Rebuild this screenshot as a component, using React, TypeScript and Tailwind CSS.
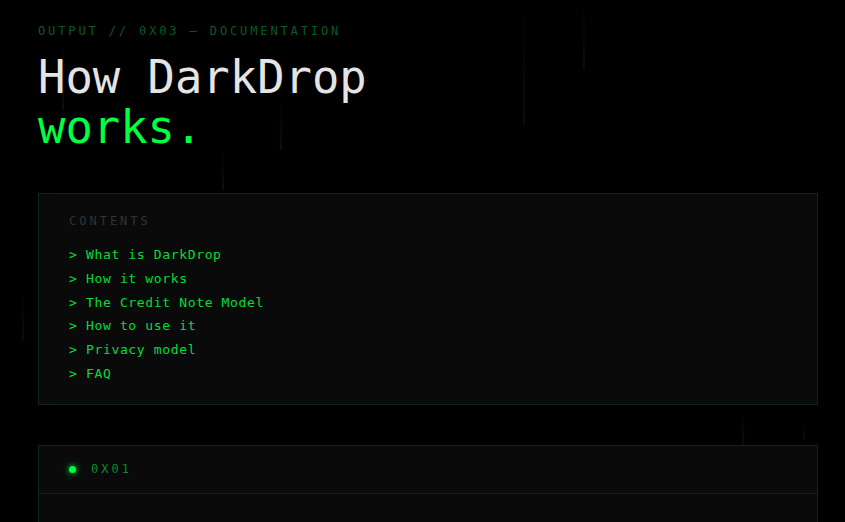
import React from "react";

const mono = { fontFamily: '"DejaVu Sans Mono", "Liberation Mono", monospace' };

const items = [
  "What is DarkDrop",
  "How it works",
  "The Credit Note Model",
  "How to use it",
  "Privacy model",
  "FAQ",
];

const streaks = [
  { left: 62, top: 40, h: 70 },
  { left: 222, top: 150, h: 40 },
  { left: 280, top: 100, h: 50 },
  { left: 523, top: 10, h: 115 },
  { left: 583, top: 0, h: 70 },
  { left: 22, top: 290, h: 50 },
  { left: 742, top: 410, h: 35 },
  { left: 803, top: 420, h: 20 },
];

export default function App() {
  return (
    <div className="relative w-full h-[522px] overflow-hidden bg-black" style={mono}>
      {streaks.map((s, i) => (
        <div
          key={i}
          className="absolute w-[2px] bg-gradient-to-b from-transparent to-[#08100a]"
          style={{ left: s.left, top: s.top, height: s.h }}
        />
      ))}
      <div className="relative pl-[38px] pr-[27px] pt-[23px]">
        <div className="text-[12px] leading-[16px] tracking-[0.24em] text-[#0b5a1f] uppercase">
          OUTPUT // 0X03 — DOCUMENTATION
        </div>
        <h1 className="mt-[14px] text-[45.5px] leading-[49.5px] font-normal">
          <span className="block text-[#e4e4e4]">How DarkDrop</span>
          <span className="block text-[#00ff41]">works.</span>
        </h1>

        <div className="mt-[41px] border border-[#0e2612] bg-[#0a0a0a] pl-[30px] pt-[19px] pb-[18px]">
          <div className="text-[12px] leading-[16px] tracking-[0.25em] text-[#333333] mb-[14px]">
            CONTENTS
          </div>
          <ul className="flex flex-col">
            {items.map((t) => (
              <li key={t} className="text-[13px] leading-[23.8px] tracking-[0.05em] text-[#00dd3c]">
                &gt; {t}
              </li>
            ))}
          </ul>
        </div>

        <div className="mt-[40px] border border-[#0e2612] bg-[#0a0a0a] h-[200px]">
          <div className="flex items-center h-[48px] pl-[30px] gap-[15px] border-b border-[#0e2612]">
            <span className="w-[7px] h-[7px] rounded-full bg-[#00ff41] shadow-[0_0_6px_#00ff41]" />
            <span className="text-[12px] tracking-[0.25em] text-[#0b8a2c]">0X01</span>
          </div>
        </div>
      </div>
    </div>
  );
}
